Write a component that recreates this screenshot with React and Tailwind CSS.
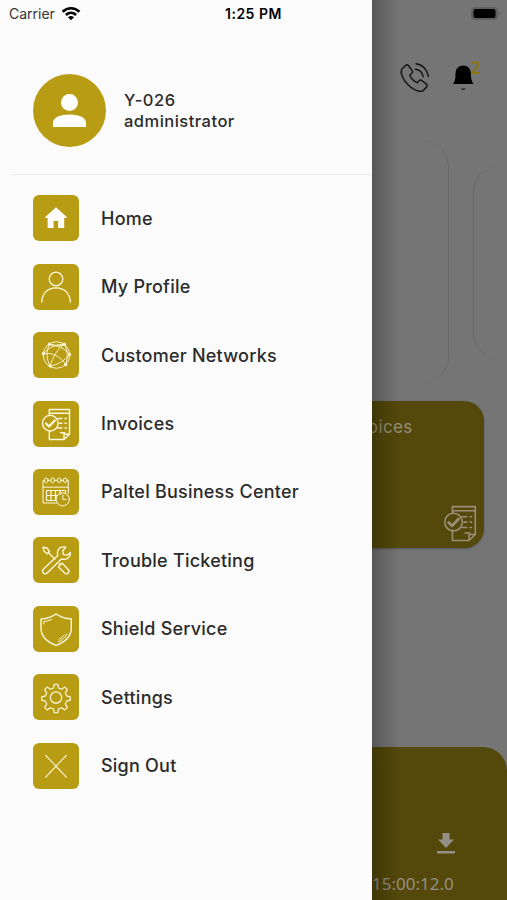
import React from 'react';

const line = { fill: 'none', stroke: 'currentColor', strokeLinecap: 'round', strokeLinejoin: 'round' };

function HomeIcon() {
  return (
    <svg className="size-full text-white" viewBox="0 0 46 46">
      <path d="M23 12.2 34.5 22.7h-3.3v10.4h-6v-7h-4.6v7h-6V22.7H11.5Z" fill="currentColor" />
    </svg>
  );
}

function ProfileIcon() {
  return (
    <svg className="size-full" viewBox="0 0 46 46" {...line} strokeWidth="1.3">
      <circle cx="23" cy="15" r="6.8" />
      <path d="M8.8 38C9 29.3 14.8 23.8 23 23.8S37 29.3 37.4 38" />
    </svg>
  );
}

function NetworkIcon() {
  return (
    <svg className="size-full" viewBox="0 0 46 46" {...line} strokeWidth="0.9">
      <circle cx="23.5" cy="23" r="13.3" />
      <path d="M16.5 12.2C21.5 14.5 27 14.8 31.300 12.2M16.5 12.2C13 19 13 27 17.2 34M10.4 21.7C16 15 23 12.3 31.3 12.2M31.3 12.2C34.5 18 35.2 24 33 32.7M10.4 21.7C19 20 27 24 33 32.7M37 22.5C31 28.5 25 33 17.2 34M16.5 12.2C24 13 31 16 37 22.5M17.2 34C19.8 24.5 24.5 17 31.3 12.2" />
      <g fill="currentColor" stroke="none">
        <circle cx="16.5" cy="12.2" r="1.6" />
        <circle cx="31.3" cy="12.2" r="1.6" />
        <circle cx="10.4" cy="21.7" r="1.6" />
        <circle cx="36.7" cy="22.5" r="1.4" />
        <circle cx="17.2" cy="34" r="1.6" />
        <circle cx="32.7" cy="32.7" r="1.6" />
      </g>
    </svg>
  );
}

function InvoiceIcon() {
  return (
    <svg className="size-full" viewBox="0 0 46 46" {...line} strokeWidth="1.4">
      <path d="M16.3 14V8.5h20.2v24.7L31 38.5H16.3v-8M16.3 12.2h20.2M31 38.5v-5.3h5.5" />
      <circle cx="17.3" cy="22.2" r="7.8" />
      <path d="m13 22.5 3 3 5.7-6" strokeWidth="2.4" />
      <path d="M25 17.5h4M32 17.5h1.2M26.5 22.2h2.5M32 22.2h1.2M25 27h4M32 27h1.2M27.5 31.8h4.3" strokeWidth="1.4" />
    </svg>
  );
}

function CalendarIcon() {
  return (
    <svg className="size-full" viewBox="0 0 46 46" {...line} strokeWidth="1">
      <path d="M23.5 34H10V11.5h1.2M34 11.5h1.3V24M10 18.2h25.3" />
      {[13.2, 19.7, 26.2, 32.3].map((x) => (
        <ellipse key={x} cx={x} cy="11.3" rx="1.9" ry="2.4" />
      ))}
      <path d="M15.2 11.3h2.5M21.7 11.3h2.5M28.2 11.3h2" />
      <path d="M13.5 21.5h19V24M13.5 21.5v10h9.5M13.5 26.5h11M18 21.5v10M22.5 21.5v10M27 21.5v4" strokeWidth="1.2" />
      <circle cx="29.8" cy="30.3" r="6.6" />
      <path d="M29.8 26v4.5H33" />
    </svg>
  );
}

function ToolsIcon() {
  return (
    <svg className="size-full" viewBox="0 0 46 46" {...line} strokeWidth="1.35">
      <path d="M10 10.2 14 11l2.500 3.500-2.200 2.200L11 14.300ZM15.500 15.700l6.300 6.400" />
      <path d="M32.7 10.2c-3-1-6.3 0-7.6 2.8-.9 2-.8 3.6-.3 5.400L10.300 32.200a2.600 2.600 0 0 0 3.800 3.800l14.300-14c4.800 1.500 9.100-1.500 9-6.600l-3.300 2.800-3.700-.6-.7-3.700Z" />
      <path d="m26.500 26.700 1.200 1.200M25.700 30.200c-.3-1.600 2-4 3.800-3.700l6 6.200c1.800 2-1.400 5.400-3.600 3.600Z" />
    </svg>
  );
}

function ShieldIcon() {
  return (
    <svg className="size-full" viewBox="0 0 46 46" {...line} strokeWidth="1.4">
      <path d="M23 7.700c4.200 3.600 9.200 5 15.300 5.200v9c0 7.900-5.900 13.800-15.300 17.400C13.800 35.700 8 29.800 8 21.900v-9c6.100-.2 11-1.600 15-5.200Z" />
      <path d="M10.800 18v-2.600c3-.2 5.400-.8 7.800-1.900M25.300 35.700c4.700-2 7.200-4.400 8.600-7.800M26 33.200c2.400-1.300 4-2.500 5.200-4.300" strokeWidth="1" />
    </svg>
  );
}

function GearIcon() {
  return (
    <svg className="size-full" viewBox="0 0 46 46" {...line} strokeWidth="1.200">
      <path d="M21.300 10.300h3.400l.9 3.700 3 1.200 3.200-2.100 2.600 2.600-2.100 3.200 1.200 3 3.700.9v3.400l-3.700.9-1.200 3 2.100 3.200-2.600 2.600-3.200-2.100-3 1.200-.9 3.700h-3.400l-.9-3.700-3-1.200-3.200 2.100-2.600-2.600 2.100-3.200-1.200-3-3.700-.9v-3.400l3.700-.9 1.200-3-2.100-3.200 2.600-2.600 3.200 2.100 3-1.200Z" />
      <circle cx="23" cy="23.500" r="5.700" />
    </svg>
  );
}

function CloseIcon() {
  return (
    <svg className="size-full" viewBox="0 0 46 46" {...line} strokeWidth="1.100">
      <path d="m12.700 12.300 20.600 21.800M33.300 12.300 12.700 34.100" />
    </svg>
  );
}

const menu = [
  { label: 'Home', Icon: HomeIcon },
  { label: 'My Profile', Icon: ProfileIcon },
  { label: 'Customer Networks', Icon: NetworkIcon },
  { label: 'Invoices', Icon: InvoiceIcon },
  { label: 'Paltel Business Center', Icon: CalendarIcon },
  { label: 'Trouble Ticketing', Icon: ToolsIcon },
  { label: 'Shield Service', Icon: ShieldIcon },
  { label: 'Settings', Icon: GearIcon },
  { label: 'Sign Out', Icon: CloseIcon },
];

function Drawer() {
  return (
    <aside className="relative z-10 flex h-full w-[372px] shrink-0 flex-col bg-[#fbfbfb] text-[#2b2b2b]">
      <header className="flex h-[27px] items-center pl-[9px] text-black">
        <span className="w-[52px] text-[14px] tracking-[0px] text-[#333]">Carrier</span>
        <svg className="h-[15px] w-5" viewBox="0 0 20 15" fill="none" stroke="currentColor" strokeWidth="2.600">
          <path d="M1.600 5.700C6.500 1 13.500 1 18.400 5.700M4.900 9C8 6.200 12 6.200 15.100 9" />
          <path d="M10 14.200 7 11.300q3-2.600 6 0Z" fill="currentColor" stroke="none" />
        </svg>
        <span className="ml-[144px] text-[14px] font-semibold tracking-[0.500px]">1:25 PM</span>
      </header>
      <div className="flex h-[147px] items-center gap-[18px] pl-[33px] pt-[20px]">
        <div className="mb-[1px] size-[73px] rounded-full bg-[#b79c14] text-white">
          <svg className="size-full" viewBox="0 0 73 73" fill="currentColor">
            <circle cx="36.500" cy="28.500" r="8.500" />
            <path d="M20 53v-4.200c0-5.500 7.700-8.300 16.500-8.300S53 43.300 53 48.800V53Z" />
          </svg>
        </div>
        <p className="text-[16.500px] font-medium leading-[20.500px] tracking-[0.480px]">
          Y-026
          <br />
          administrator
        </p>
      </div>
      <hr className="ml-[11px] border-[#ececec]" />
      <nav className="flex flex-col gap-[22.400px] pl-[33px] pt-[20.400px]">
        {menu.map(({ label, Icon }) => (
          <a key={label} className="flex h-[46px] items-center gap-[22px]">
            <span className="size-[46px] rounded-[6px] bg-[#b79c14] text-[#fff8dc]">
              <Icon />
            </span>
            <span className="text-[18px] font-medium tracking-[0.230px]">{label}</span>
          </a>
        ))}
      </nav>
    </aside>
  );
}

function Dashboard() {
  return (
    <section className="relative flex h-full min-w-0 flex-1 flex-col bg-[#757575]">
      <div className="flex h-[27px] items-center justify-end pr-[5px]">
        <svg className="h-[15px] w-8" viewBox="0 0 32 15">
          <rect x="1" y="1" width="27" height="13" rx="4" fill="#5f5f5f" />
          <rect x="3.500" y="3" width="22" height="9" rx="2" fill="#000" />
          <path d="M29.500 5.200q2.500 2.200 0 4.600Z" fill="#5f5f5f" />
        </svg>
      </div>
      <div className="flex h-[114px] items-start gap-[21px] pl-[27px] pt-[33px]">
        <svg className="h-9 w-8 shrink-0 text-[#161616]" viewBox="0 0 32 36" {...line} strokeWidth="1.500">
          <path d="M6.800 5.300 2.800 9C1 12.800 3.500 19 8.500 24.300s11.200 8.200 15.300 6.600l4-4c.7-1 .5-2-.4-2.800l-4.500-3.600c-1-.8-2-.6-2.800.2l-1.800 2c-2.900-.9-6.500-4.500-7.500-7.500l2-1.900c.9-.9 1-1.900.2-2.900L9.500 5.700c-.8-1-1.800-1.100-2.700-.4Z" />
          <path d="M17 3.700c6.200.6 11.500 6 12.400 12.700M16.500 9.300c4.100.5 7 3.400 7.700 7.500" />
        </svg>
        <div className="flex items-start">
          <svg className="h-9 w-[22px] shrink-0" viewBox="0 0 22 36">
            <path d="M1 24C4 19.500 3.200 17 3.600 12.500 4 8.500 6.700 5.600 11.200 5.600s7.200 2.900 7.600 6.900c.4 4.500-.2 7 2.800 11.500Z" fill="#000" />
            <path d="M8.800 28.500h5q-2.500 3-5 0Z" fill="#222" />
          </svg>
          <span className="-ml-[3px] font-['Noto_Sans'] text-[17px] font-semibold leading-4 text-[#8b7510]">2</span>
        </div>
      </div>
      <div className="flex h-[242px] items-center gap-6 overflow-hidden">
        <div className="h-[242px] w-[77px] shrink-0 rounded-r-[26px] border-r-[1.500px] border-[#686868]" />
        <div className="h-[193px] w-[120px] shrink-0 rounded-l-[26px] border-l-[1.500px] border-[#686868]" />
      </div>
      <article className="mt-[18px] flex h-[147px] w-[112px] shrink-0 flex-col justify-between rounded-r-[20px] bg-[#54490a] text-[#999079] shadow-[0_1px_2px_#555]">
        <h2 className="-ml-[29px] pt-[14px] text-[17px] tracking-[0.400px]">Invoices</h2>
        <div className="mb-[-1px] mr-[-2px] size-[52px] self-end">
          <InvoiceIcon />
        </div>
      </article>
      <article className="mt-[199px] flex h-[153px] shrink-0 flex-col rounded-tr-[24px] bg-[#54490a] text-[#939087]">
        <svg className="ml-[65px] mt-[85px] h-[22px] w-[18px] shrink-0" viewBox="0 0 18 22" fill="currentColor">
          <path d="M5.500 1h7v6.500h4.500L9 16 1 7.500h4.500ZM0 19h18v2.500H0Z" />
        </svg>
        <p className="mt-[18px] font-['Noto_Sans'] text-[17px] leading-6">15:00:12.0</p>
      </article>
      <div className="pointer-events-none absolute inset-y-0 left-0 w-7 bg-linear-to-r from-black/25 to-transparent" />
    </section>
  );
}

export default function App() {
  return (
    <main className="flex h-[900px] w-[507px] overflow-hidden font-['Inter','Liberation_Sans',sans-serif]">
      <Drawer />
      <Dashboard />
    </main>
  );
}
